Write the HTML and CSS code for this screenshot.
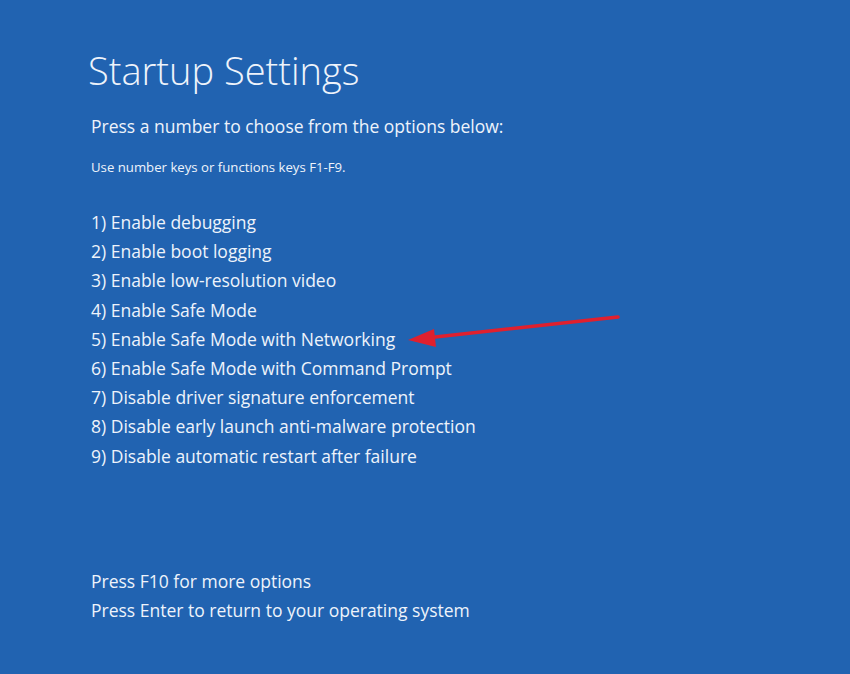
FILE: index.html
```html
<!DOCTYPE html>
<html lang="en">
<head>
    <meta charset="UTF-8">
    <meta name="viewport" content="width=device-width, initial-scale=1.0">
    <title>Startup Settings</title>
    <link rel="stylesheet" href="styles.css">
</head>
<body>
<div class="screen">
    <h1>Startup Settings</h1>
    <p class="lead">Press a number to choose from the options below:</p>
    <p class="hint">Use number keys or functions keys F1-F9.</p>

    <!-- Options -->
    <ol class="options">
        <li>1) Enable debugging</li>
        <li>2) Enable boot logging</li>
        <li>3) Enable low-resolution video</li>
        <li>4) Enable Safe Mode</li>
        <li class="marked">5) Enable Safe Mode with Networking
            <svg class="arrow" width="220" height="40" viewBox="0 0 220 40">
                <line x1="214" y1="3" x2="22" y2="24" stroke="#e0202e" stroke-width="3.5" stroke-linecap="round"/>
                <polygon points="4,26 30,15 32,33" fill="#e0202e"/>
            </svg>
        </li>
        <li>6) Enable Safe Mode with Command Prompt</li>
        <li>7) Disable driver signature enforcement</li>
        <li>8) Disable early launch anti-malware protection</li>
        <li>9) Disable automatic restart after failure</li>
    </ol>

    <div class="footer">
        <p>Press F10 for more options</p>
        <p>Press Enter to return to your operating system</p>
    </div>
</div>
</body>
</html>
```
FILE: styles.css
```css
body {
    margin: 0;
    padding: 0;
    background-color: #2163b1;
    font-family: "Open Sans", "Noto Sans", sans-serif;
    color: #eef3fb;
}
.screen {
    height: 674px;
    padding: 42px 0 0 88px;
    box-sizing: border-box;
    display: flex;
    flex-direction: column;
}
h1 {
    margin: 0;
    font-size: 38px;
    font-weight: 300;
    line-height: 56px;
}
.lead {
    margin: 16px 0 0 3px;
    font-size: 17.5px;
    font-weight: 400;
    line-height: 24px;
}
.hint {
    margin: 20px 0 0 3px;
    font-size: 13.2px;
    line-height: 18px;
}
.options {
    list-style: none;
    margin: 32px 0 0 3px;
    padding: 0;
}
.options li {
    font-size: 17.5px;
    line-height: 29.2px;
    position: relative;
}
.arrow {
    position: absolute;
    left: 313px;
    top: -11px;
}
.footer {
    margin-top: auto;
    margin-bottom: 49px;
    margin-left: 3px;
}
.footer p {
    margin: 0;
    font-size: 17.5px;
    line-height: 29px;
}
```
